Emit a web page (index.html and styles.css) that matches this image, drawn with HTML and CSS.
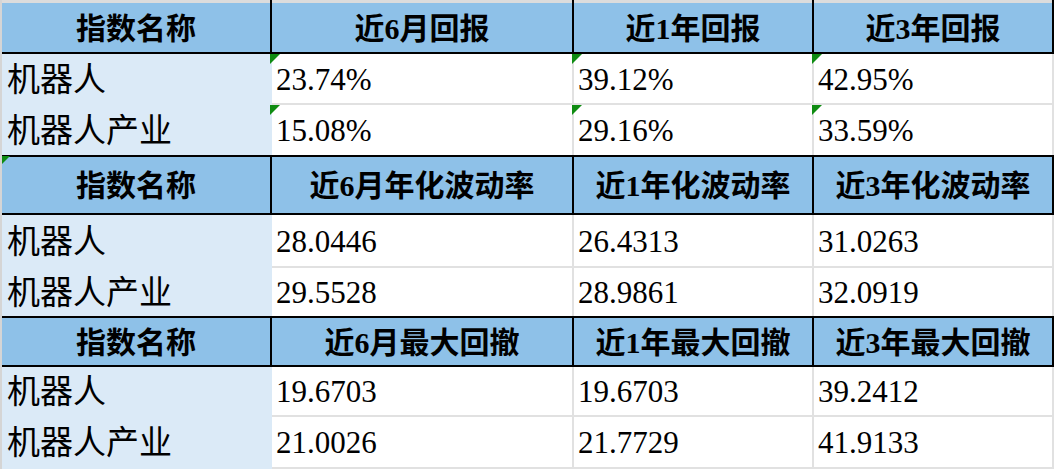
FILE: index.html
```html
<!DOCTYPE html>
<html lang="zh">
<head>
<meta charset="utf-8">
<title>指数对比</title>
<link rel="stylesheet" href="styles.css">
</head>
<body>
<div class="sheet">
  <div class="hrow first h52">
    <div class="hc">指数名称</div>
    <div class="hc">近6月回报</div>
    <div class="hc">近1年回报</div>
    <div class="hc">近3年回报</div>
  </div>
  <div class="drow sep h49">
    <div class="name">机器人</div>
    <div class="val flag">23.74%</div>
    <div class="val flag">39.12%</div>
    <div class="val flag">42.95%</div>
  </div>
  <div class="drow h50">
    <div class="name">机器人产业</div>
    <div class="val flag">15.08%</div>
    <div class="val flag">29.16%</div>
    <div class="val flag">33.59%</div>
  </div>

  <div class="hrow h56">
    <div class="hc flag-s">指数名称</div>
    <div class="hc">近6月年化波动率</div>
    <div class="hc">近1年化波动率</div>
    <div class="hc">近3年化波动率</div>
  </div>
  <div class="drow sep h51">
    <div class="name">机器人</div>
    <div class="val">28.0446</div>
    <div class="val">26.4313</div>
    <div class="val">31.0263</div>
  </div>
  <div class="drow h48">
    <div class="name">机器人产业</div>
    <div class="val">29.5528</div>
    <div class="val">28.9861</div>
    <div class="val">32.0919</div>
  </div>

  <div class="hrow h47">
    <div class="hc">指数名称</div>
    <div class="hc">近6月最大回撤</div>
    <div class="hc">近1年最大回撤</div>
    <div class="hc">近3年最大回撤</div>
  </div>
  <div class="drow sep h48">
    <div class="name">机器人</div>
    <div class="val">19.6703</div>
    <div class="val">19.6703</div>
    <div class="val">39.2412</div>
  </div>
  <div class="drow sep h50">
    <div class="name">机器人产业</div>
    <div class="val">21.0026</div>
    <div class="val">21.7729</div>
    <div class="val">41.9133</div>
  </div>
</div>
</body>
</html>
```

FILE: styles.css
```css
html, body {
  margin: 0;
  padding: 0;
  background: #ffffff;
}

body {
  font-family: "Liberation Serif", "Noto Sans CJK SC", serif;
  color: #000000;
}

.sheet {
  width: 1052px;
  border-left: 2px solid #d5d5d5;
  display: flex;
  flex-direction: column;
}

.hrow,
.drow {
  display: grid;
  grid-template-columns: 268px 300px 238px 238px;
  grid-template-rows: 1fr;
  column-gap: 2px;
  padding-right: 2px;
}

.hrow {
  background: #000000;
  border-top: 2px solid #000000;
  border-bottom: 2px solid #000000;
}

.hrow.first {
  border-top: 0;
}

.hrow.first .hc {
  border-top: 3px solid #dcdcdc;
}

.hc {
  background: #8ec1e8;
  display: flex;
  align-items: center;
  justify-content: center;
  font-size: 30px;
  font-weight: 700;
  line-height: 1.2;
  padding-top: 2px;
  position: relative;
}

.drow {
  background: linear-gradient(to right, #dbeaf7 270px, #e1e1e1 270px);
}

.drow.sep {
  padding-bottom: 2px;
}

.name {
  display: flex;
  align-items: center;
  padding-left: 5px;
  padding-top: 4px;
  font-size: 33px;
  line-height: 1.2;
}

.val {
  background: #ffffff;
  display: flex;
  align-items: center;
  padding-left: 4px;
  padding-top: 2px;
  font-size: 31px;
  line-height: 1.2;
  position: relative;
}

.flag::before {
  content: "";
  position: absolute;
  left: -2px;
  top: 0;
  border-top: 10px solid #0f8c12;
  border-right: 10px solid transparent;
}

.flag-s::before {
  content: "";
  position: absolute;
  left: 0;
  top: -1px;
  border-top: 8px solid #0f8c12;
  border-right: 8px solid transparent;
}

.h47 { height: 47px; }
.h48 { height: 48px; }
.h49 { height: 49px; }
.h50 { height: 50px; }
.h51 { height: 51px; }
.h52 { height: 52px; }
.h56 { height: 56px; }
```
